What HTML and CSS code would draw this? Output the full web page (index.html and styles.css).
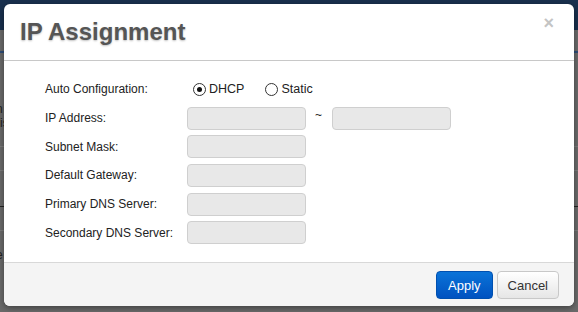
FILE: index.html
```html
<html>
    <head>
        <title>IP Assignment</title>
        <link rel="stylesheet" href="styles.css">
    </head>
    <body>
        <div class="page">
            <div class="topbar"></div>
            <div class="band band-blue"></div>
            <div class="band band-text">n<br />is</div>
            <div class="band band-light"></div>
            <div class="band band-dark"></div>
            <div class="band band-light"></div>
            <div class="band band-last">e</div>
        </div>

        <div class="modal">
            <div class="modal-header">
                <h3>IP Assignment</h3>
                <span class="close">&times;</span>
            </div>
            <div class="modal-body">
                <div class="row">
                    <label>Auto Configuration:</label>
                    <span class="radio checked"></span><span class="radio-text">DHCP</span>
                    <span class="radio"></span><span class="radio-text">Static</span>
                </div>
                <div class="row">
                    <label>IP Address:</label>
                    <input type="text" disabled>
                    <span class="tilde">~</span>
                    <input type="text" disabled>
                </div>
                <div class="row">
                    <label>Subnet Mask:</label>
                    <input type="text" disabled>
                </div>
                <div class="row">
                    <label>Default Gateway:</label>
                    <input type="text" disabled>
                </div>
                <div class="row">
                    <label>Primary DNS Server:</label>
                    <input type="text" disabled>
                </div>
                <div class="row">
                    <label>Secondary DNS Server:</label>
                    <input type="text" disabled>
                </div>
            </div>
            <div class="modal-footer">
                <button class="btn btn-primary">Apply</button>
                <button class="btn">Cancel</button>
            </div>
        </div>
    </body>
</html>
```

FILE: styles.css
```css
body {
    margin: 0px;
    padding: 0px;
    width: 578px;
    height: 312px;
    overflow: hidden;
    background-color: #6a6a6a;
    font-family: Arial, 'Liberation Sans', sans-serif;
}

.page {
    height: 312px;
}

.topbar {
    height: 30px;
    background-color: #19304e;
}

.band {
    border-bottom: 1px solid #7c7c7c;
    color: #222;
    font-size: 12px;
    text-indent: -4px;
}

.band-blue {
    height: 21px;
    border-bottom: 2px solid #2f4d78;
}

.band-text {
    height: 94px;
    line-height: 14px;
    box-sizing: border-box;
    padding-top: 49px;
}

.band-light {
    height: 23px;
}

.band-dark {
    height: 35px;
    border-bottom: 1px solid #222;
}

.band-last {
    height: 60px;
    line-height: 48px;
    border-bottom: 0;
}

.modal {
    position: absolute;
    left: 4px;
    top: 4px;
    width: 570px;
    height: 302px;
    background-color: white;
    border-radius: 6px;
    overflow: hidden;
    box-shadow: 0 2px 6px rgba(0, 0, 0, 0.4);
    display: flex;
    flex-direction: column;
}

.modal-header {
    height: 56px;
    border-bottom: 1px solid #c8c8c8;
    display: flex;
    align-items: center;
    justify-content: space-between;
    padding: 0 20px 0 16px;

    h3 {
        margin: 0;
        font-size: 24px;
        font-weight: bold;
        color: #555;
        text-shadow: 0 1px 2px rgba(0, 0, 0, 0.25);
        padding-bottom: 1px;
    }
}

.close {
    color: #c4c4c4;
    font-size: 18px;
    font-weight: bold;
    align-self: flex-start;
    margin-top: 9px;
}

.modal-body {
    flex: 1;
    padding: 14px 0 0 41px;
}

.row {
    display: flex;
    align-items: center;
    height: 28.7px;
    font-size: 12px;
    color: #222;

    label {
        width: 142px;
    }

    input {
        width: 119px;
        height: 23px;
        box-sizing: border-box;
        border: 1px solid #cfcfcf;
        border-radius: 4px;
        background-color: #e8e8e8;
        margin: 0;
    }
}

.radio {
    width: 11px;
    height: 11px;
    border: 1px solid #333;
    border-radius: 50%;
    margin-left: 6px;
    margin-right: 3px;
    display: flex;
    align-items: center;
    justify-content: center;
}

.radio.checked::after {
    content: '';
    width: 5px;
    height: 5px;
    border-radius: 50%;
    background-color: #111;
}

.radio-text {
    font-size: 12.5px;
    margin-right: 15px;
}

.tilde {
    width: 26px;
    padding-left: 9px;
    box-sizing: border-box;
    margin-top: -7px;
}

.modal-footer {
    height: 44px;
    border-top: 1px solid #d8d8d8;
    background-color: #f4f4f4;
    display: flex;
    justify-content: flex-end;
    align-items: flex-start;
    gap: 4px;
    padding: 8px 15px 0 0;
    box-sizing: border-box;
}

.btn {
    height: 28px;
    padding: 0 10px;
    font-family: Arial, 'Liberation Sans', sans-serif;
    font-size: 13px;
    color: #333;
    border: 1px solid #c8c8c8;
    border-radius: 4px;
    background: linear-gradient(#ffffff, #e6e6e6);
}

.btn-primary {
    color: white;
    border-color: #0050b0;
    background: linear-gradient(#0a73d8, #0052c0);
    padding: 0 11px;
}
```
